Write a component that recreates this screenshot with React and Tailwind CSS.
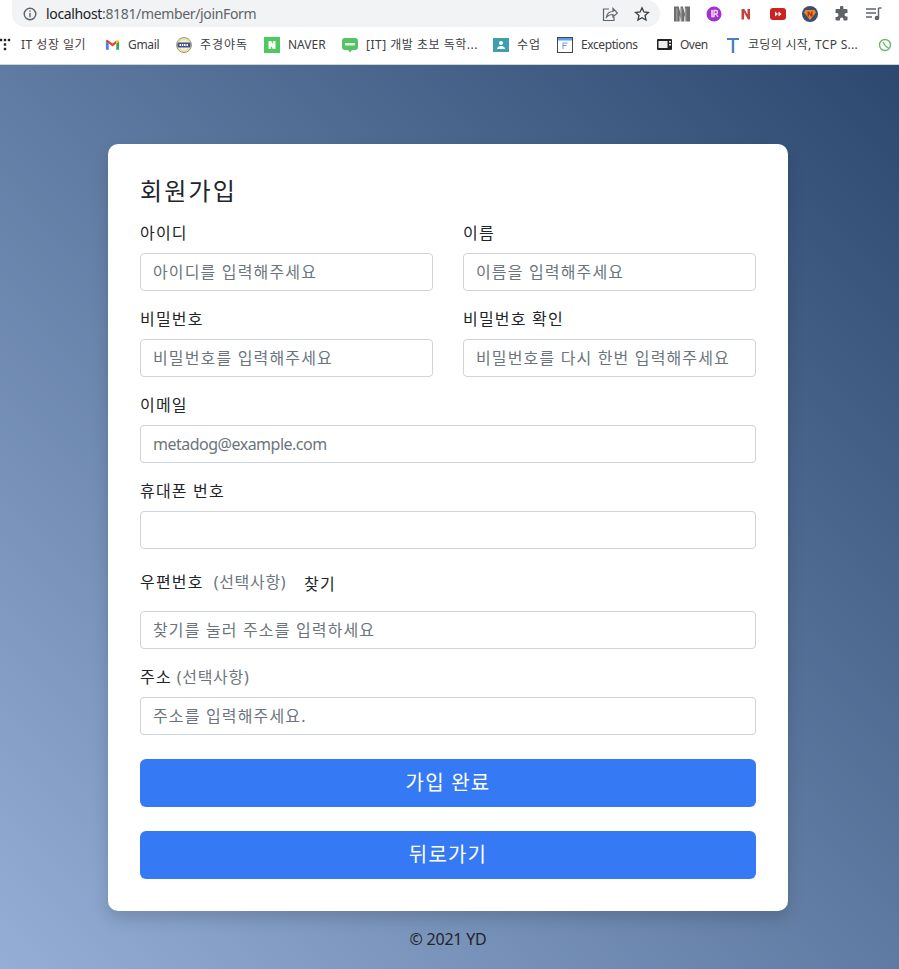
const FONT = "font-['Noto_Sans','Noto_Sans_CJK_KR',sans-serif]";

function Field({ label, hint, placeholder, className = "", latin = false }) {
  return (
    <div className={`flex flex-col ${className}`}>
      <label className="h-6 mb-2 text-base leading-6 tracking-[1.2px] text-[#212529] whitespace-nowrap">
        {label}
        {hint && <span className="tracking-[0.7px] text-[#6c757d]"> {hint}</span>}
      </label>
      <Input placeholder={placeholder} latin={latin} />
    </div>
  );
}

function Input({ placeholder, latin = false }) {
  return (
    <input
      placeholder={placeholder}
      className={`h-[38px] w-full rounded border border-[#ced4da] bg-white px-3 text-base text-[#212529] outline-none placeholder:text-[#6c757d] ${latin ? "tracking-[-0.5px]" : "tracking-[1.15px]"}`}
    />
  );
}

function Bookmark({ w, icon, text, gap = "gap-2", track = "", color = "text-[#3c4043]" }) {
  return (
    <div className={`flex items-center shrink-0 ${gap} ${w}`}>
      <span className="w-4 h-4 shrink-0 flex items-center justify-center">{icon}</span>
      <span className={`text-xs whitespace-nowrap ${track} ${color}`}>{text}</span>
    </div>
  );
}

function ToolIcon({ children, className = "" }) {
  return <span className={`flex items-center justify-center w-4 h-4 shrink-0 ${className}`}>{children}</span>;
}

const Dots = () => (
  <svg width="16" height="16" viewBox="0 0 16 16" fill="#222">
    {[[1,3],[5,3],[9,3],[5,7.500],[5,12]].map(([x, y]) => <rect key={`${x}${y}`} x={x-1.200} y={y-1.200} width="2.400" height="2.400" />)}
  </svg>
);
const GmailIcon = () => (
  <svg width="15" height="12" viewBox="0 0 16 12">
    <path d="M1 11V2l3 2.400V11H1z" fill="#4285f4" />
    <path d="M12 11V4.400L15 2v9h-3z" fill="#34a853" />
    <path d="M12 1.500v3L8 7.500l-4-3v-3l4 3z" fill="#ea4335" />
    <path d="M1 2c0-1 1-1.500 2-1l1 .5v3L1 2z" fill="#c5221f" />
    <path d="M15 2c0-1-1-1.500-2-1l-1 .5v3L15 2z" fill="#fbbc04" />
  </svg>
);
const YakIcon = () => (
  <svg width="16" height="16" viewBox="0 0 16 16">
    <circle cx="8" cy="8" r="7.500" fill="#e7e29a" stroke="#8a8a70" strokeWidth=".8" />
    <circle cx="8" cy="8" r="5.500" fill="#f2efc4" />
    <rect x="1.500" y="5.500" width="13" height="5" rx="1" fill="#3d4f9a" />
    <path d="M3.500 8h9" stroke="#fff" strokeWidth="2" strokeDasharray="1.500 .8" />
  </svg>
);
const NaverIcon = () => (
  <svg width="16" height="16" viewBox="0 0 16 16">
    <rect width="16" height="16" fill="#4fc95e" />
    <path d="M4.500 4h2.700l1.700 3V4h2.600v8H8.800L7 9v3H4.500z" fill="#fff" />
  </svg>
);
const BlogIcon = () => (
  <svg width="16" height="16" viewBox="0 0 16 16">
    <path d="M3 1h10a3 3 0 0 1 3 3v6a3 3 0 0 1-3 3h-3l-2 2.500L6 13H3a3 3 0 0 1-3-3V4a3 3 0 0 1 3-3z" fill="#55c267" />
    <rect x="3" y="6" width="10" height="2.500" fill="#d9f3dd" />
  </svg>
);
const ClassIcon = () => (
  <svg width="16" height="14" viewBox="0 0 16 14">
    <rect width="16" height="14" fill="#3f9fae" />
    <circle cx="8" cy="5" r="2" fill="#fff" />
    <path d="M4 11c0-2 2-3 4-3s4 1 4 3z" fill="#fff" />
  </svg>
);
const ExcIcon = () => (
  <svg width="16" height="16" viewBox="0 0 16 16">
    <rect x=".5" y=".5" width="15" height="15" fill="#fff" stroke="#444" />
    <rect x="1" y="1" width="14" height="2.500" fill="#5b9bf0" />
    <path d="M6 6h4.500M6 6v6M6 8.500h3.500" stroke="#5b9bf0" fill="none" />
  </svg>
);
const OvenIcon = () => (
  <svg width="15" height="12" viewBox="0 0 15 12">
    <rect width="15" height="11" rx="1" fill="#222" />
    <rect x="1.500" y="2" width="9" height="7" fill="#eee" />
    <rect x="12" y="2" width="2" height="1.500" fill="#eee" />
    <rect x="12" y="5" width="2" height="1.500" fill="#eee" />
  </svg>
);
const TIcon = () => (
  <svg width="16" height="16" viewBox="0 0 16 16">
    <path d="M2 1h12v2H9.200v13H6.800V3H2z" fill="#4b7fc4" />
  </svg>
);
const ClockIcon = () => (
  <svg width="14" height="14" viewBox="0 0 14 14" fill="none" stroke="#69b868" strokeWidth="1.400">
    <circle cx="7" cy="7" r="5.500" />
    <path d="M5 4l2.500 4 3 2" />
  </svg>
);

export default function App() {
  return (
    <div className={`w-[899px] h-[969px] flex flex-col overflow-hidden bg-white ${FONT}`}>
      <header className="h-[65px] shrink-0 border-b border-[#d0d3d7] bg-white">
        <div className="h-7 flex items-center pl-3">
          <div className="w-[648px] shrink-0 h-[27px] -mt-px rounded-r-full rounded-bl-full bg-[#f1f3f4] flex items-center pl-[11px] pr-[10px]">
            <svg width="14" height="14" viewBox="0 0 14 14" fill="none" stroke="#5f6368" strokeWidth="1.400">
              <circle cx="7" cy="7" r="5.800" />
              <path d="M7 6v4.200M7 3.400v1.400" />
            </svg>
            <span className="ml-[9px] text-[14px] tracking-[-0.35px] text-[#202124]">localhost<span className="text-[#5f6368]">:8181/member/joinForm</span></span>
            <div className="ml-auto flex items-center gap-4">
              <ToolIcon>
                <svg width="16" height="16" viewBox="0 0 16 16" fill="none" stroke="#5f6368" strokeWidth="1.200">
                  <path d="M7 3H1.500v11.500H12V11" />
                  <path d="M4.500 11c.5-3.500 3-5.500 6.500-5.500V2.500L15.500 7 11 11V8.500c-2.700 0-5 .8-6.500 2.500z" />
                </svg>
              </ToolIcon>
              <ToolIcon>
                <svg width="16" height="16" viewBox="0 0 16 16" fill="none" stroke="#3c4043" strokeWidth="1.300">
                  <path d="M8 1.800l1.900 4.200 4.500.5-3.400 3 1 4.500L8 11.700 4 14l1-4.500-3.400-3 4.500-.5z" />
                </svg>
              </ToolIcon>
            </div>
          </div>
          <div className="ml-[14px] flex items-center gap-4">
            <ToolIcon>
              <svg width="17" height="16" viewBox="0 0 17 16" fill="#6e6e6e">
                <path d="M0 0h5l2 8V0h2.500l2 8V0H17v16h-4l-2-7v7H8L6 9v7H0z" />
                <path d="M3 2v14M7.500 2v14M12.500 2v14" stroke="#a8a8a8" strokeWidth="1.200" />
              </svg>
            </ToolIcon>
            <ToolIcon>
              <svg width="16" height="16" viewBox="0 0 16 16">
                <circle cx="8" cy="8" r="7.500" fill="#a62fd0" />
                <path d="M6 4v6.500h2.500" stroke="#f4e6f9" strokeWidth="1.500" fill="none" />
                <path d="M8 10.500V4.500h2c2 0 2 3.500 0 3.500H8M10 8l2 3" stroke="#f4e6f9" strokeWidth="1.300" fill="none" />
              </svg>
            </ToolIcon>
            <ToolIcon>
              <svg width="16" height="16" viewBox="0 0 16 16">
                <path d="M3.500 3h2.800l3.200 5.500V3H12v10.500H10L6 6.500v7H3.500z" fill="#c8403a" />
              </svg>
            </ToolIcon>
            <ToolIcon>
              <svg width="16" height="12" viewBox="0 0 16 12">
                <rect width="16" height="12" rx="3" fill="#cc2320" />
                <path d="M5 3.500l3 2.500-3 2.500zM8.500 3.500l3 2.500-3 2.500z" fill="#fff" />
              </svg>
            </ToolIcon>
            <ToolIcon>
              <svg width="16" height="16" viewBox="0 0 16 16">
                <circle cx="8" cy="8" r="8" fill="#3d4c74" />
                <path d="M3.500 4h9l1.500 2.500L8 14 2 6.500z" fill="#e88b1c" />
                <path d="M5.500 5.500h1.500l2 2.500V5.500h1.500v5H9L7 8v2.500H5.500z" fill="#b5341e" />
              </svg>
            </ToolIcon>
            <ToolIcon>
              <svg width="16" height="16" viewBox="0 0 16 16" fill="#5f6368">
                <path d="M6 1.500a1.700 1.700 0 0 1 3.400 0V3h3.100a1 1 0 0 1 1 1v3h-1.200a1.800 1.800 0 0 0 0 3.600h1.200v3a1 1 0 0 1-1 1H9.500v-1.200a1.800 1.800 0 0 0-3.600 0v1.200H2.500a1 1 0 0 1-1-1V11h1a2 2 0 0 0 0-4h-1V4a1 1 0 0 1 1-1H6z" />
              </svg>
            </ToolIcon>
            <ToolIcon>
              <svg width="16" height="16" viewBox="0 0 16 16" fill="none" stroke="#5f6368" strokeWidth="1.400">
                <path d="M0 3h10M0 7h10M0 11h6M12.500 2v10" />
                <path d="M12.500 2h3" />
                <circle cx="11" cy="12" r="1.600" fill="#5f6368" />
              </svg>
            </ToolIcon>
          </div>
        </div>
        <div className="h-9 flex items-center overflow-hidden -mt-px">
          <Bookmark w="w-[104px]" gap="gap-[5px]" track="tracking-[0.5px]" icon={<Dots />} text="IT 성장 일기" color="text-[#4a3a3a]" />
          <Bookmark w="w-[72px]" track="tracking-[-0.3px]" icon={<GmailIcon />} text="Gmail" />
          <Bookmark w="w-[88px]" track="tracking-[1px]" icon={<YakIcon />} text="주경야독" />
          <Bookmark w="w-[78px]" icon={<NaverIcon />} text="NAVER" />
          <Bookmark w="w-[151px]" track="tracking-[0.5px]" icon={<BlogIcon />} text="[IT] 개발 초보 독학..." />
          <Bookmark w="w-[64px]" icon={<ClassIcon />} track="tracking-[1px]" text="수업" />
          <Bookmark w="w-[99px]" track="tracking-[-0.4px]" icon={<ExcIcon />} text="Exceptions" />
          <Bookmark w="w-[69px]" track="tracking-[-0.5px]" icon={<OvenIcon />} text="Oven" />
          <Bookmark w="w-[152px]" gap="gap-[7px]" track="tracking-[0.3px]" icon={<TIcon />} text="코딩의 시작, TCP S..." />
          <Bookmark w="w-[22px]" icon={<ClockIcon />} text="" />
        </div>
      </header>

      <main className="flex-1 flex flex-col items-center pr-[3px] pt-[79px] bg-[linear-gradient(to_top_right,#94aed6,#2c486f)]">
        <form className="w-[680px] h-[767px] rounded-[10px] bg-white p-8 shadow-[0_8px_16px_rgba(0,0,0,0.15)]">
          <h4 className="h-[29px] mb-4 text-2xl leading-[29px] tracking-[2.2px] text-[#212529]">회원가입</h4>
          <div className="grid grid-cols-2 gap-x-[30px] gap-y-4 mb-4">
            <Field label="아이디" placeholder="아이디를 입력해주세요" />
            <Field label="이름" placeholder="이름을 입력해주세요" />
            <Field label="비밀번호" placeholder="비밀번호를 입력해주세요" />
            <Field label="비밀번호 확인" placeholder="비밀번호를 다시 한번 입력해주세요" />
          </div>
          <Field className="mb-4" label="이메일" latin placeholder="metadog@example.com" />
          <Field className="mb-4" label="휴대폰 번호" placeholder="" />
          <div className="flex items-start h-[38px] mb-2">
            <label className="mt-[5px] h-6 w-[152px] text-base leading-6 tracking-[1.2px] text-[#212529] whitespace-nowrap">
              우편번호<span className="ml-[10px] tracking-[0.7px] text-[#6c757d]">(선택사항)</span>
            </label>
            <button type="button" className="h-[38px] px-3 text-base tracking-[1.2px] text-[#212529] bg-transparent">찾기</button>
          </div>
          <div className="mb-4"><Input placeholder="찾기를 눌러 주소를 입력하세요" /></div>
          <Field className="mb-6" label="주소" hint="(선택사항)" placeholder="주소를 입력해주세요." />
          <button type="button" className="block w-full h-12 mb-6 rounded-md bg-[#3679f5] text-xl tracking-[1.2px] text-white">가입 완료</button>
          <button type="button" className="block w-full h-12 rounded-md bg-[#3679f5] text-xl tracking-[1.2px] text-white">뒤로가기</button>
        </form>
        <p className="mt-4 text-base leading-6 tracking-[-0.2px] text-[#212529]">© 2021 YD</p>
      </main>
    </div>
  );
}
